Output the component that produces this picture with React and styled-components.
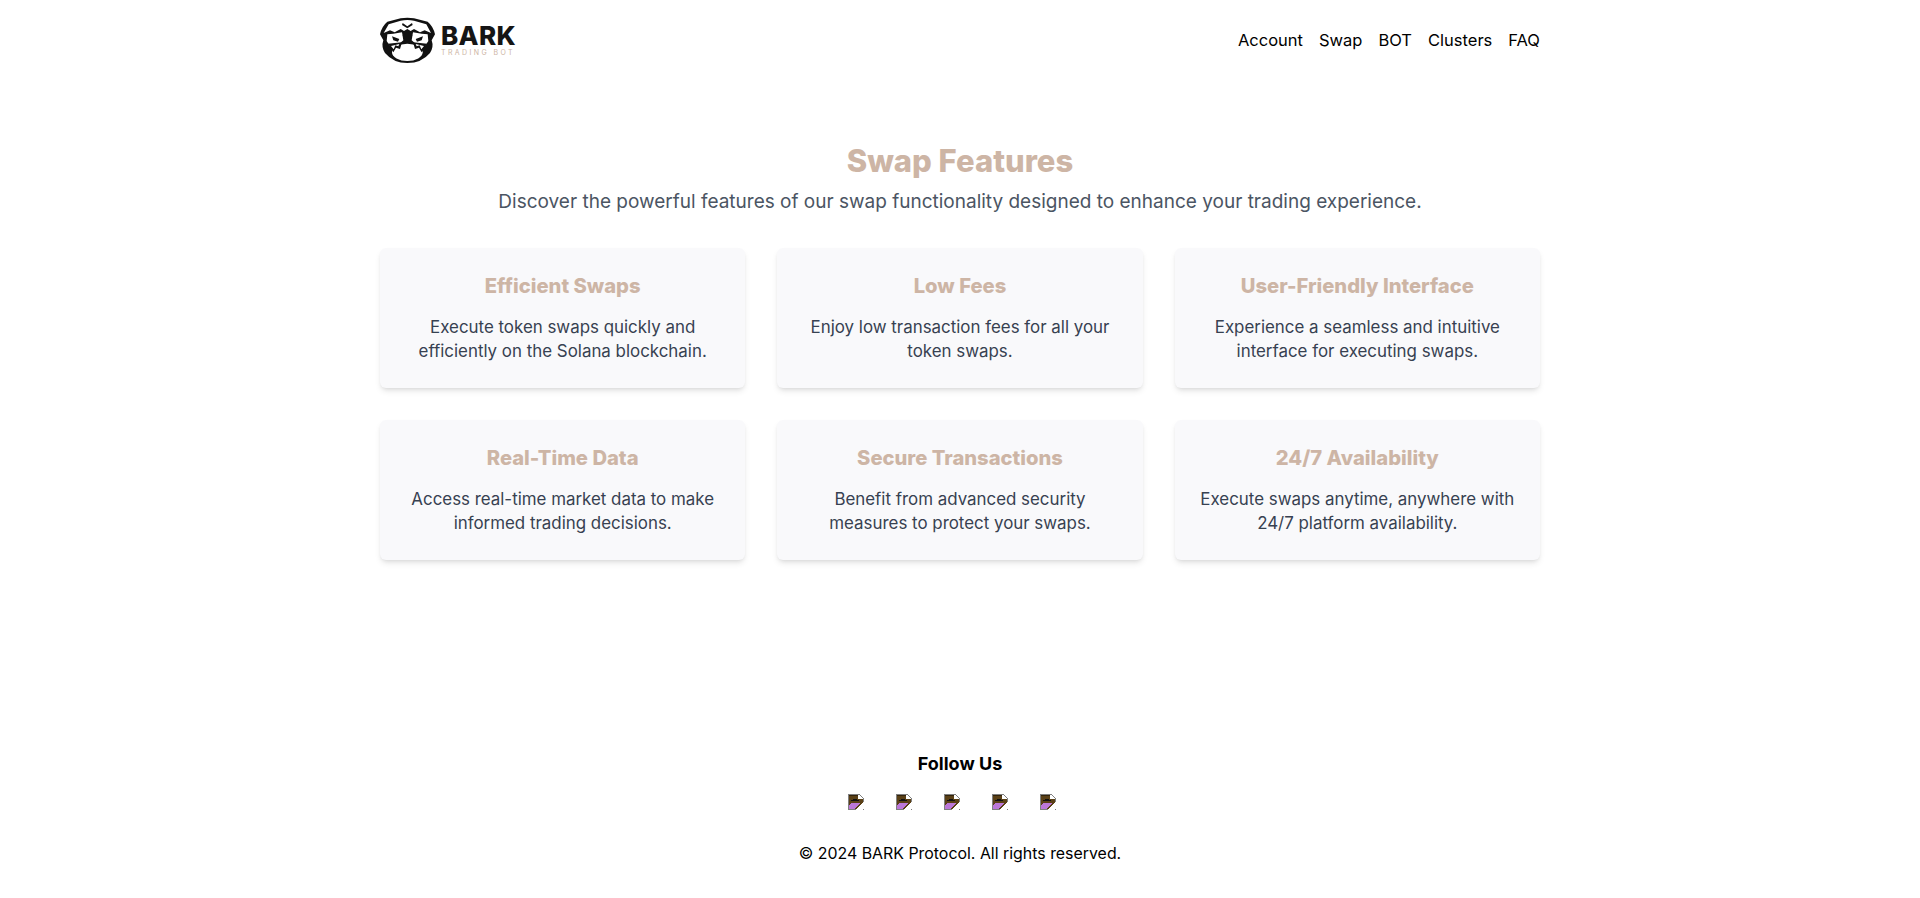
import styled, { createGlobalStyle } from "styled-components";

const features = [
  { title: "Efficient Swaps", text: ["Execute token swaps quickly and", "efficiently on the Solana blockchain."] },
  { title: "Low Fees", text: ["Enjoy low transaction fees for all your", "token swaps."] },
  { title: "User-Friendly Interface", text: ["Experience a seamless and intuitive", "interface for executing swaps."] },
  { title: "Real-Time Data", text: ["Access real-time market data to make", "informed trading decisions."] },
  { title: "Secure Transactions", text: ["Benefit from advanced security", "measures to protect your swaps."] },
  { title: "24/7 Availability", text: ["Execute swaps anytime, anywhere with", "24/7 platform availability."] },
];

const navLinks = ["Account", "Swap", "BOT", "Clusters", "FAQ"];

const Logo = () => (
  <svg width="55" height="46" viewBox="0 0 165 138">
    <path d="M22 14 L62 4 Q82 0 102 4 L143 14 Q160 28 165 52 L155 70 Q162 90 150 108 Q125 138 82 138 Q40 138 15 108 Q3 90 10 70 L0 52 Q5 28 22 14 Z" fill="#111" />
    <path d="M26 22 L62 11 Q82 7 102 11 L139 22 L153 48 L134 40 L120 46 L102 36 L92 42 L82 36 L72 42 L62 36 L44 46 L30 40 L11 48 Z" fill="#fff" />
    <path d="M68 18 L82 28 L96 18 L98 24 L82 34 L66 24 Z" fill="#111" />
    <path d="M22 52 L40 50 L66 46 L70 70 L58 80 L32 90 L20 72 Z" fill="#fff" />
    <path d="M143 52 L125 50 L99 46 L95 70 L107 80 L133 90 L145 72 Z" fill="#fff" />
    <path d="M36 58 L58 66 L54 74 L40 70 Z M129 58 L107 66 L111 74 L125 70 Z" fill="#111" />
    <path d="M68 54 L97 54 L92 68 L82 76 L73 68 Z" fill="#111" />
    <ellipse cx="82" cy="106" rx="46" ry="26" fill="#fff" />
    <path d="M24 80 L40 106 L48 92 L60 96 L66 76 Z M141 80 L125 106 L117 92 L105 96 L99 76 Z" fill="#111" />
    <path d="M33 87 L41 97 L46 85 L55 88 L58 81 Z M132 87 L124 97 L119 85 L110 88 L107 81 Z" fill="#fff" />
  </svg>
);

const BrokenImage = () => (
  <svg width="16" height="16" viewBox="0 0 16 16" shapeRendering="crispEdges">
    <path d="M0 0 H11 L16 5 V16 H0 Z" fill="#808080" />
    <path d="M1 1 H10 V5 H15 V15 H1 Z" fill="#5a4016" />
    <path d="M1 1 H10 V2 H1 Z" fill="#33240c" />
    <path d="M3 6 H5 V5 H9 V6 H11 V7 H3 Z" fill="#111" />
    <path d="M1 15 V11 L4 9 H12 L7 15 Z" fill="#bb77d8" />
    <path d="M10 1 H11 L15 5 H10 Z" fill="#fff" />
    <path d="M7 16 L16 8 V11 L11 16 Z" fill="#fff" />
    <path d="M11 16 L16 11 V16 Z" fill="#fff" />
    <path d="M14 16 H16 V14 Z" fill="#808080" />
  </svg>
);

const App = () => (
  <>
    <GlobalStyle />
    <Page>
      <Header>
        <Brand>
          <Logo />
          <BrandText>
            <BrandName>BARK</BrandName>
            <BrandTag>TRADING BOT</BrandTag>
          </BrandText>
        </Brand>
        <Nav>
          {navLinks.map((link) => (
            <NavLink key={link}>{link}</NavLink>
          ))}
        </Nav>
      </Header>

      <Main>
        <Title>Swap Features</Title>
        <Subtitle>Discover the powerful features of our swap functionality designed to enhance your trading experience.</Subtitle>
        <Grid>
          {features.map((feature) => (
            <Card key={feature.title}>
              <CardTitle>{feature.title}</CardTitle>
              <CardText>
                {feature.text.map((line) => (
                  <span key={line}>{line}</span>
                ))}
              </CardText>
            </Card>
          ))}
        </Grid>
      </Main>

      <Footer>
        <FollowTitle>Follow Us</FollowTitle>
        <Socials>
          {[0, 1, 2, 3, 4].map((i) => (
            <BrokenImage key={i} />
          ))}
        </Socials>
        <Copyright>© 2024 BARK Protocol. All rights reserved.</Copyright>
      </Footer>
    </Page>
  </>
);

export default App;

const GlobalStyle = createGlobalStyle`
  body {
    margin: 0;
    background: #fff;
    font-family: "Inter", "Liberation Sans", sans-serif;
  }
`;

const Page = styled.div`
  width: 1160px;
  height: 898px;
  margin: 0 auto;
  display: flex;
  flex-direction: column;
`;

const Header = styled.header`
  height: 79px;
  display: flex;
  justify-content: space-between;
  align-items: center;
`;

const Brand = styled.div`
  display: flex;
  align-items: center;
  gap: 6px;
`;

const BrandText = styled.div`
  display: flex;
  flex-direction: column;
`;

const BrandName = styled.div`
  font-size: 26px;
  font-weight: 800;
  line-height: 26px;
  letter-spacing: 0.3px;
  color: #151515;
`;

const BrandTag = styled.div`
  font-size: 7px;
  line-height: 8px;
  letter-spacing: 2.4px;
  color: #cdb5a5;
`;

const Nav = styled.nav`
  display: flex;
  gap: 16px;
`;

const NavLink = styled.a`
  font-size: 16.5px;
  color: #000;
  line-height: 24px;
`;

const Main = styled.main`
  padding-top: 62px;
  display: flex;
  flex-direction: column;
  align-items: center;
`;

const Title = styled.h1`
  margin: 0;
  font-size: 31px;
  line-height: 40px;
  font-weight: 800;
  color: #cdb5a5;
`;

const Subtitle = styled.p`
  margin: 7px 0 0;
  font-size: 19px;
  line-height: 28px;
  color: #4b5563;
`;

const Grid = styled.div`
  width: 100%;
  margin-top: 32px;
  display: grid;
  grid-template-columns: repeat(3, 1fr);
  gap: 32px;
`;

const Card = styled.div`
  height: 140px;
  box-sizing: border-box;
  padding: 24px 16px 0;
  background: #f9f9fb;
  border-radius: 6px;
  box-shadow: 0 4px 6px -1px rgba(0, 0, 0, 0.1), 0 2px 4px -2px rgba(0, 0, 0, 0.1);
  text-align: center;
`;

const CardTitle = styled.h2`
  margin: 0;
  font-size: 20.2px;
  line-height: 28px;
  font-weight: 800;
  color: #cdb5a5;
`;

const CardText = styled.p`
  margin: 15px 0 0;
  font-size: 16.9px;
  line-height: 24px;
  color: #374151;
  span {
    display: block;
  }
`;

const Footer = styled.footer`
  margin-top: 190px;
  display: flex;
  flex-direction: column;
  align-items: center;
`;

const FollowTitle = styled.h3`
  margin: 0;
  font-size: 18px;
  line-height: 28px;
  font-weight: 700;
  color: #000;
`;

const Socials = styled.div`
  margin-top: 16px;
  padding-right: 16px;
  display: flex;
  gap: 32px;
  height: 16px;
`;

const Copyright = styled.p`
  margin: 32px 0 0;
  font-size: 15.9px;
  line-height: 24px;
  color: #000;
`;
